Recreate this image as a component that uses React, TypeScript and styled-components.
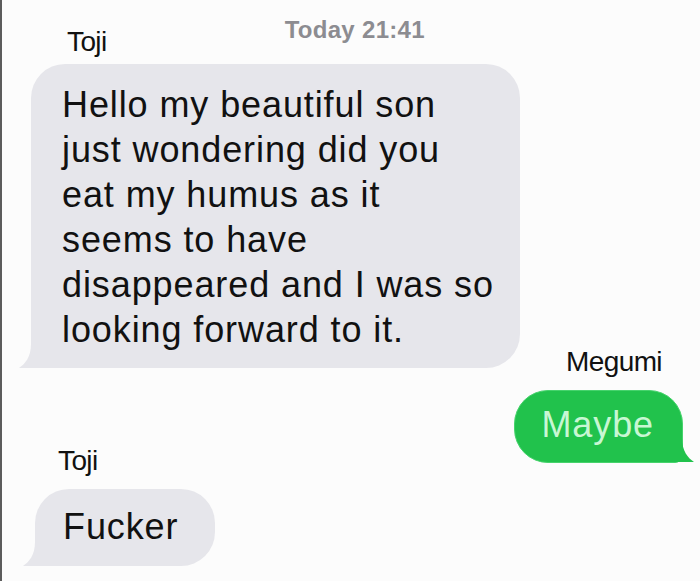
import React from "react";
import styled, { createGlobalStyle } from "styled-components";

const Global = createGlobalStyle`
  html, body { margin: 0; padding: 0; background: #fcfcfc; }
  body { font-family: "Liberation Sans", Arial, sans-serif; }
`;

const Screen = styled.div`
  width: 700px;
  height: 581px;
  box-sizing: border-box;
  border-left: 2px solid #5c5c5c;
  background: #fcfcfc;
  overflow: hidden;
  display: flex;
  flex-direction: column;
  align-items: flex-start;
  color: #111;
`;

const Header = styled.div`
  height: 64px;
  display: flex;
  align-items: flex-start;
  flex-shrink: 0;
`;

const Sender = styled.div<{ $left?: number; $right?: number; $top: number }>`
  font-size: 28px;
  line-height: 28px;
  letter-spacing: -0.6px;
  color: #111;
  margin-top: ${(p) => p.$top}px;
  margin-left: ${(p) => (p.$left ?? 0) - 2}px;
  margin-right: ${(p) => p.$right ?? 0}px;
  align-self: ${(p) => (p.$right !== undefined ? "flex-end" : "flex-start")};
`;

const Stamp = styled.div`
  margin-top: 18px;
  margin-left: 178px;
  font-size: 24px;
  line-height: 24px;
  letter-spacing: 0.3px;
  font-weight: 700;
  color: #8c8c91;
`;

const Bubble = styled.div<{ $mine?: boolean }>`
  position: relative;
  box-sizing: border-box;
  background: ${(p) => (p.$mine ? "#21c24c" : "#e6e6eb")};
  color: ${(p) => (p.$mine ? "#c8f7d3" : "#111")};
  border: ${(p) => (p.$mine ? "1px solid #46d36c" : "none")};
  border-radius: 34px;
  ${(p) =>
    p.$mine
      ? "border-bottom-right-radius: 8px;"
      : "border-bottom-left-radius: 8px;"}
  font-size: 36px;
  letter-spacing: 0.9px;
`;

const LongBubble = styled(Bubble)`
  margin-left: 29px;
  width: 489px;
  height: 304px;
  padding: 18px 0 0 31px;
  line-height: 45px;
  white-space: pre-line;
`;

const ShortBubble = styled(Bubble)<{ $side: "left" | "right"; $gap: number }>`
  height: ${(p) => (p.$mine ? 73 : 77)}px;
  display: flex;
  align-items: center;
  line-height: 36px;
  margin-top: ${(p) => p.$gap}px;
  align-self: ${(p) => (p.$side === "right" ? "flex-end" : "flex-start")};
  margin-left: ${(p) => (p.$side === "left" ? 33 : 0)}px;
  margin-right: ${(p) => (p.$side === "right" ? 17 : 0)}px;
  padding: ${(p) => (p.$mine ? "0 28px 3px 26px" : "0 37px 2px 28px")};
`;

const Tail = styled.svg<{ $side: "left" | "right" }>`
  position: absolute;
  bottom: 0;
  width: 24px;
  height: 24px;
  ${(p) => (p.$side === "left" ? "left: -12px;" : "right: -12px;")}
`;

const BubbleTail = ({ side, color }: { side: "left" | "right"; color: string }) => (
  <Tail $side={side} viewBox="0 0 24 24">
    {side === "left" ? (
      <path d="M12 0 C12 13 6 20 0 24 L20 24 L20 0 Z" fill={color} />
    ) : (
      <path d="M12 0 C12 13 18 20 24 24 L4 24 L4 0 Z" fill={color} />
    )}
  </Tail>
);

const message =
  "Hello my beautiful son\njust wondering did you\neat my humus as it\nseems to have\ndisappeared and I was so\nlooking forward to it.";

export default function App() {
  return (
    <>
      <Global />
      <Screen>
        <Header>
          <Sender $left={67} $top={28}>
            Toji
          </Sender>
          <Stamp>Today 21:41</Stamp>
        </Header>
        <LongBubble>
          {message}
          <BubbleTail side="left" color="#e6e6eb" />
        </LongBubble>
        <Sender $right={38} $top={-20}>
          Megumi
        </Sender>
        <ShortBubble $mine $side="right" $gap={14}>
          Maybe
          <BubbleTail side="right" color="#21c24c" />
        </ShortBubble>
        <Sender $left={58} $top={-16}>
          Toji
        </Sender>
        <ShortBubble $side="left" $gap={14}>
          Fucker
          <BubbleTail side="left" color="#e6e6eb" />
        </ShortBubble>
      </Screen>
    </>
  );
}
